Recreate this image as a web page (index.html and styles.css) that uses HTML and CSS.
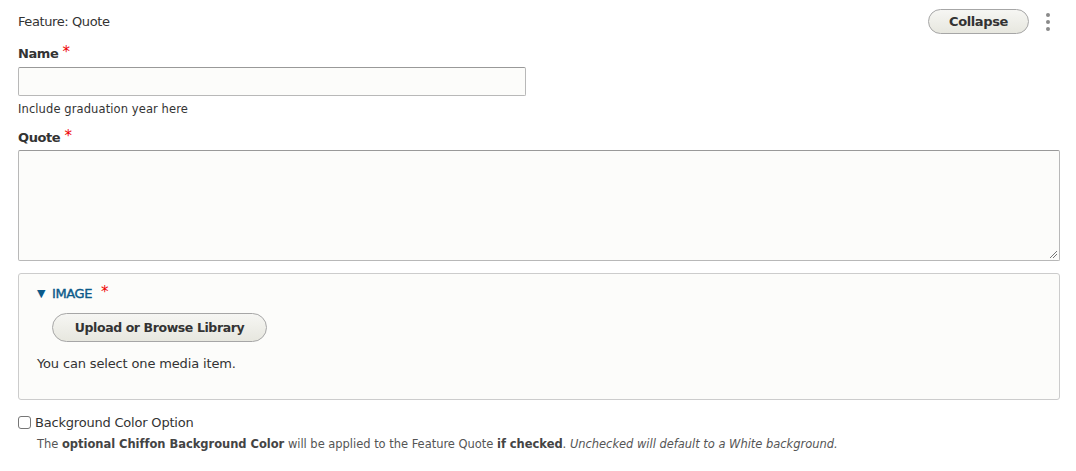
FILE: index.html
```html
<!DOCTYPE html>
<html>
<head>
<meta charset="utf-8">
<link rel="stylesheet" href="styles.css">
</head>
<body>
<div class="paragraph">
  <div class="head">
    <span class="title">Feature: Quote</span>
    <div class="actions">
      <button class="btn btn-collapse">Collapse</button>
      <span class="kebab"><i></i><i></i><i></i></span>
    </div>
  </div>

  <label class="label label-name">Name <span class="req">*</span></label>
  <input class="text-input" type="text">
  <div class="desc">Include graduation year here</div>

  <label class="label label-quote">Quote <span class="req">*</span></label>
  <div class="textarea-wrap">
    <div class="textarea"></div>
    <svg class="grip" width="8" height="8" viewBox="0 0 8 8"><path d="M1 8 L8 1 M4 8 L8 4" stroke="#777" stroke-width="1" fill="none"/></svg>
  </div>

  <div class="fieldset">
    <div class="legend"><span class="tri">&#9660;</span><span class="legend-text">IMAGE</span><span class="req">*</span></div>
    <button class="btn btn-upload">Upload or Browse Library</button>
    <div class="help">You can select one media item.</div>
  </div>

  <div class="check-row">
    <span class="checkbox"></span>
    <span class="check-label">Background Color Option</span>
  </div>
  <div class="check-desc">The <b>optional Chiffon Background Color</b> will be applied to the Feature Quote <b>if checked</b>. <i>Unchecked will default to a White background.</i></div>
</div>
</body>
</html>
```

FILE: styles.css
```css
html, body {
  margin: 0;
  padding: 0;
  background: #fff;
}
body {
  font-family: "DejaVu Sans", Verdana, sans-serif;
  color: #333;
  font-size: 13px;
  letter-spacing: -0.4px;
}
.paragraph {
  padding: 9px 16px 0 18px;
}
.head {
  display: flex;
  justify-content: space-between;
  align-items: center;
  height: 25px;
}
.title {
  font-size: 13px;
  color: #333;
}
.actions {
  display: flex;
  align-items: center;
  margin-right: 10px;
}
.btn {
  font-family: "DejaVu Sans", Verdana, sans-serif;
  font-weight: bold;
  color: #333;
  border: 1px solid #a6a6a6;
  border-radius: 20em;
  background: linear-gradient(to bottom, #f6f6f3, #e7e7df);
  box-sizing: border-box;
  cursor: pointer;
  padding: 0;
  letter-spacing: -0.4px;
}
.btn-collapse {
  width: 101px;
  height: 25px;
  font-size: 13px;
}
.kebab {
  display: flex;
  flex-direction: column;
  gap: 3px;
  margin-left: 16px;
  width: 5px;
  align-items: center;
}
.kebab i {
  display: block;
  width: 4px;
  height: 4px;
  border-radius: 50%;
  background: #8a8a8a;
}
.label {
  display: block;
  height: 18px;
  font-weight: bold;
  font-size: 13px;
  line-height: 18px;
  color: #333;
}
.label-name {
  margin-top: 11px;
}
.req {
  color: #e00;
  font-weight: normal;
  font-size: 15px;
  line-height: 1;
  vertical-align: 1px;
}
.text-input {
  display: block;
  box-sizing: border-box;
  width: 508px;
  height: 29px;
  margin: 4px 0 0;
  border: 1px solid #b8b8b8;
  border-top-color: #999;
  border-radius: 2px;
  background: #fcfcfa;
  padding: 0;
}
.desc {
  font-size: 11.5px;
  line-height: 16px;
  margin-top: 5px;
  color: #333;
  letter-spacing: 0.1px;
}
.label-quote {
  margin-top: 12px;
}
.textarea-wrap {
  position: relative;
  margin-top: 3px;
}
.textarea {
  box-sizing: border-box;
  height: 111px;
  border: 1px solid #b8b8b8;
  border-top-color: #999;
  border-radius: 2px;
  background: #fcfcfa;
}
.grip {
  position: absolute;
  right: 3px;
  bottom: 3px;
}
.fieldset {
  box-sizing: border-box;
  margin-top: 12px;
  height: 127px;
  border: 1px solid #ccc;
  border-radius: 3px;
  background: #fcfcfa;
  padding: 12px 18px 0 18px;
}
.legend {
  display: flex;
  align-items: center;
  height: 16px;
  color: #0b5a8a;
  font-size: 13px;
  line-height: 16px;
}
.legend .tri {
  font-size: 11px;
  margin-right: 7px;
}
.legend-text {
  -webkit-text-stroke: 0.4px #0b5a8a;
  letter-spacing: -0.4px;
}
.legend .req {
  margin-left: 9px;
  vertical-align: 0;
  position: relative;
  top: -2px;
}
.btn-upload {
  display: block;
  margin: 11px 0 0 15px;
  width: 215px;
  height: 29px;
  font-size: 12.5px;
}
.help {
  margin-top: 14px;
  font-size: 13px;
  line-height: 16px;
  letter-spacing: -0.15px;
}
.check-row {
  display: flex;
  align-items: center;
  margin-top: 13px;
  height: 18px;
}
.checkbox {
  box-sizing: border-box;
  width: 13px;
  height: 13px;
  border: 1px solid #767676;
  border-radius: 3px;
  background: #fff;
}
.check-label {
  margin-left: 4px;
  font-size: 13px;
  letter-spacing: -0.2px;
}
.check-desc {
  margin: 5px 0 0 19px;
  font-size: 11.5px;
  line-height: 16px;
  color: #555;
  letter-spacing: -0.03px;
}
.check-desc b {
  color: #444;
}
```
